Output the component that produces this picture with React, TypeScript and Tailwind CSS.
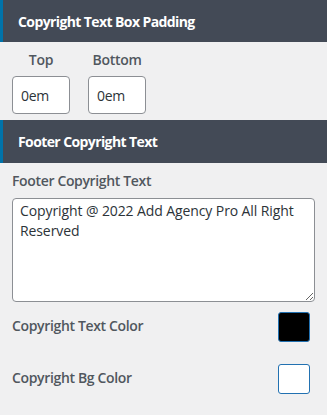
import React from "react";

const font = { fontFamily: '"Open Sans", "Noto Sans", sans-serif' };

export default function App() {
  return (
    <div className="w-[327px] h-[415px] bg-[#f0f0f1] overflow-hidden" style={font}>
      <div className="h-[42px] bg-[#434a56] border-l-[3px] border-[#0073aa] flex items-center pl-[15px]">
        <span className="text-white text-[14px] font-bold tracking-[-0.6px]">Copyright Text Box Padding</span>
      </div>
      <div className="h-[78px] flex gap-[18px] pl-[12px] pt-[8px]">
        <div className="flex flex-col items-center w-[58px]">
          <span className="text-[14px] font-semibold text-[#50575e] leading-[20px] tracking-[-0.3px]">Top</span>
          <div className="mt-[6px] w-[58px] h-[38px] bg-white border border-[#8c8f94] rounded-[4px] flex items-center pl-[8px] text-[14px] text-[#2c3338] tracking-[-0.3px]">0em</div>
        </div>
        <div className="flex flex-col items-center w-[58px]">
          <span className="text-[14px] font-semibold text-[#50575e] leading-[20px] tracking-[-0.3px]">Bottom</span>
          <div className="mt-[6px] w-[58px] h-[38px] bg-white border border-[#8c8f94] rounded-[4px] flex items-center pl-[8px] text-[14px] text-[#2c3338] tracking-[-0.3px]">0em</div>
        </div>
      </div>
      <div className="h-[43px] bg-[#434a56] border-l-[3px] border-[#0073aa] flex items-center pl-[15px]">
        <span className="text-white text-[14px] font-bold tracking-[-0.6px]">Footer Copyright Text</span>
      </div>
      <div className="px-[12px] pt-[8px]">
        <div className="text-[14px] font-semibold text-[#50575e] leading-[20px] tracking-[-0.35px]">Footer Copyright Text</div>
        <textarea
          className="mt-[7px] block w-[303px] h-[104px] bg-white border border-[#8c8f94] rounded-[4px] px-[7px] py-[2px] text-[14px] leading-[20px] text-[#2c3338] resize-y tracking-[-0.1px]"
          style={font}
          defaultValue="Copyright @ 2022 Add Agency Pro All Right Reserved"
        />
        <div className="mt-[10px] flex items-center justify-between h-[30px] pr-[5px]">
          <span className="text-[14px] font-semibold text-[#50575e] tracking-[-0.35px] -mt-[4px]">Copyright Text Color</span>
          <div className="w-[32px] h-[30px] bg-black border border-[#2271b1] rounded-[3px]" />
        </div>
        <div className="mt-[22px] flex items-center justify-between h-[30px] pr-[5px]">
          <span className="text-[14px] font-semibold text-[#50575e] tracking-[-0.35px] -mt-[3px]">Copyright Bg Color</span>
          <div className="w-[32px] h-[30px] bg-white border border-[#2271b1] rounded-[3px]" />
        </div>
      </div>
    </div>
  );
}
